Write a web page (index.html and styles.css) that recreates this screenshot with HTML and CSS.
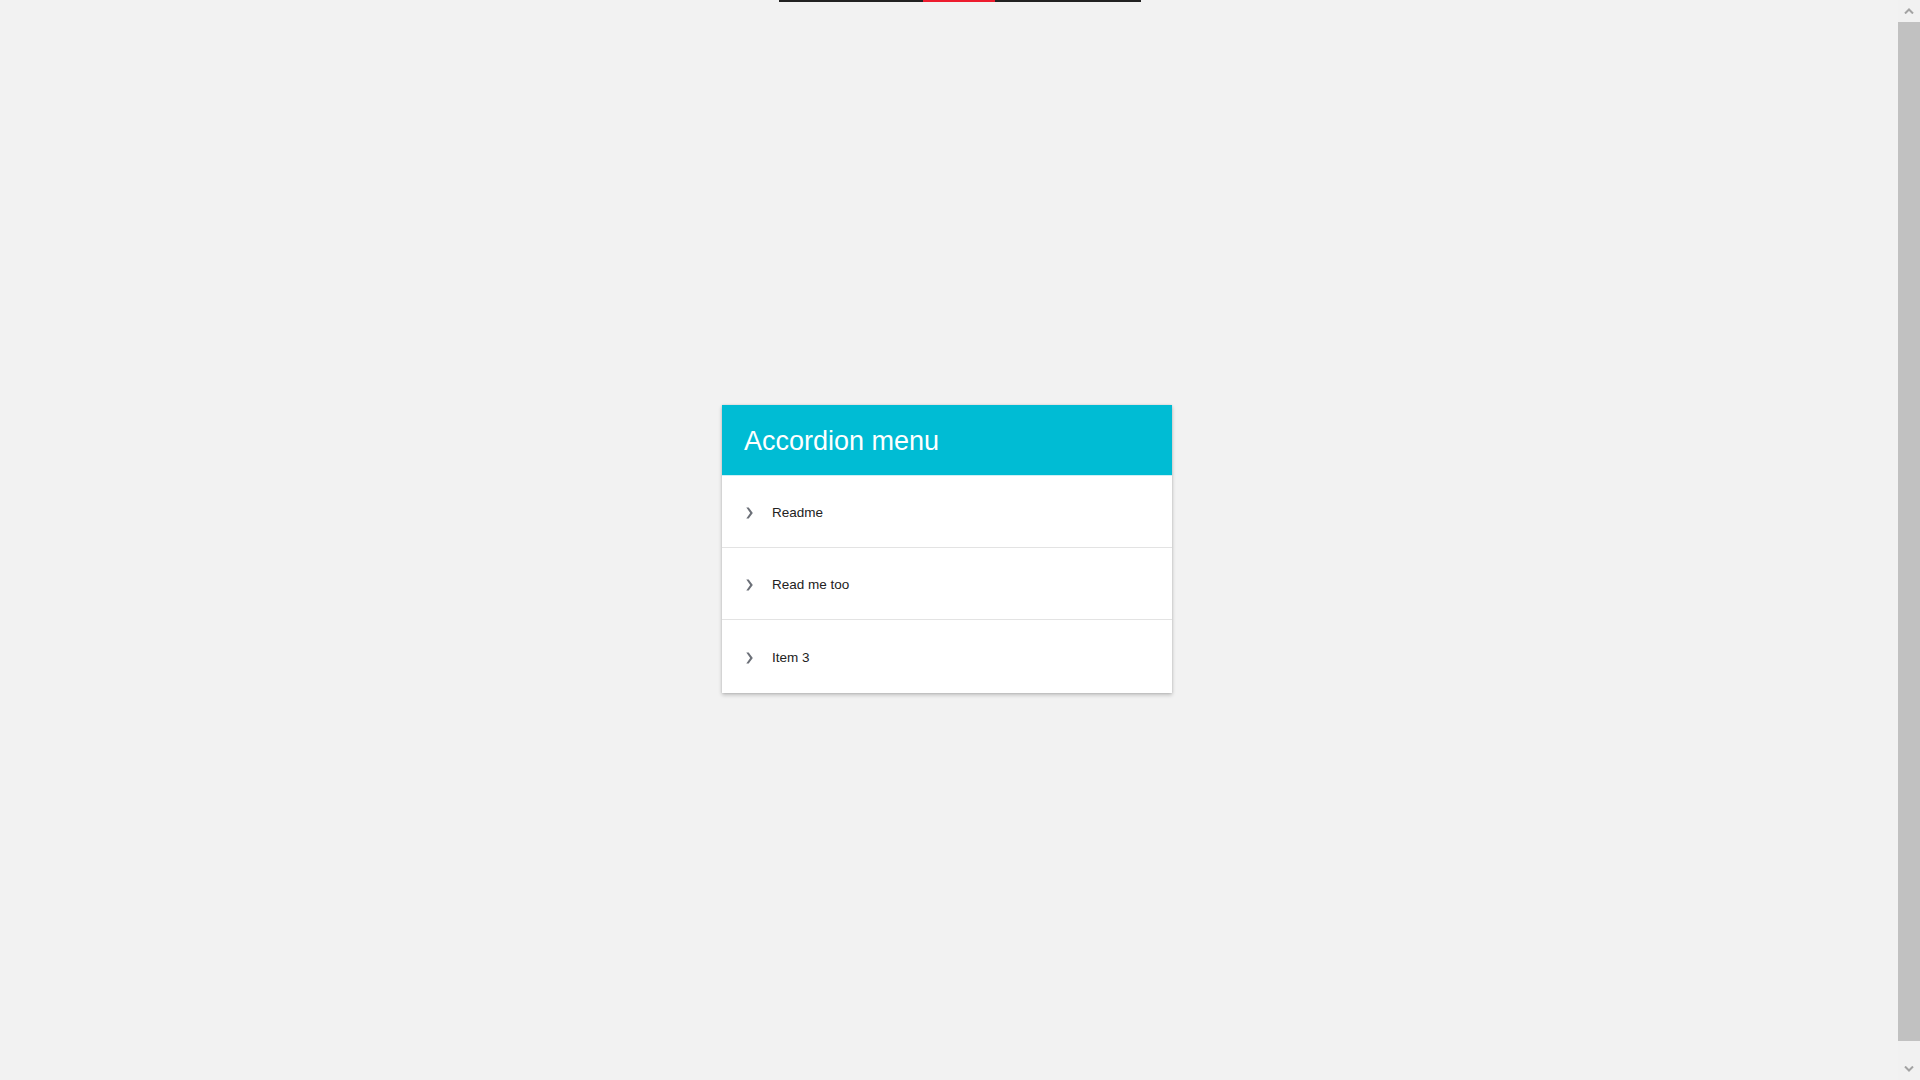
FILE: index.html
```html
<!DOCTYPE html>
<html lang="en">
<head>
<meta charset="utf-8">
<title>Accordion menu</title>
<link rel="stylesheet" href="styles.css">
</head>
<body>
<div class="loader"><span class="loader-seg"></span></div>
<main class="page">
  <section class="accordion">
    <header class="accordion-head">Accordion menu</header>
    <ul class="accordion-list">
      <li class="accordion-item">
        <svg class="chev" width="7" height="12" viewBox="0 0 7 12"><path d="M0.3 0.4 L2.7 0.4 L6.8 6 L2.7 11.6 L0.3 11.6 L4.2 6 Z" fill="#6c7078"/></svg>
        <span class="label">Readme</span>
      </li>
      <li class="accordion-item">
        <svg class="chev" width="7" height="12" viewBox="0 0 7 12"><path d="M0.3 0.4 L2.7 0.4 L6.8 6 L2.7 11.6 L0.3 11.6 L4.2 6 Z" fill="#6c7078"/></svg>
        <span class="label">Read me too</span>
      </li>
      <li class="accordion-item">
        <svg class="chev" width="7" height="12" viewBox="0 0 7 12"><path d="M0.3 0.4 L2.7 0.4 L6.8 6 L2.7 11.6 L0.3 11.6 L4.2 6 Z" fill="#6c7078"/></svg>
        <span class="label">Item 3</span>
      </li>
    </ul>
  </section>
</main>
<div class="scrollbar" aria-hidden="true">
  <div class="sb-btn">
    <svg width="10" height="6" viewBox="0 0 10 6"><path d="M1 5.5 L5 1.5 L9 5.5" fill="none" stroke="#a3a3a3" stroke-width="2"/></svg>
  </div>
  <div class="sb-track"><div class="sb-thumb"></div></div>
  <div class="sb-btn">
    <svg width="10" height="6" viewBox="0 0 10 6"><path d="M1 0.5 L5 4.5 L9 0.5" fill="none" stroke="#a3a3a3" stroke-width="2"/></svg>
  </div>
</div>
</body>
</html>
```
FILE: styles.css
```css
html {
  background: #f2f2f2;
}
body {
  margin: 0;
  min-height: 1080px;
  background: #f2f2f2;
  font-family: "Liberation Sans", Arial, sans-serif;
  color: #333;
  position: relative;
}
.loader {
  position: absolute;
  top: 0;
  left: 779px;
  width: 362px;
  height: 2px;
  background: #222;
  z-index: 2;
}
.loader-seg {
  position: absolute;
  top: 0;
  left: 144px;
  width: 72px;
  height: 2px;
  background: #ed1c2e;
}
.page {
  display: flex;
  justify-content: center;
  align-items: flex-start;
  padding: 405px 26px 0 0;
}
.accordion {
  width: 450px;
  background: #fff;
  box-shadow: 0 2px 4px rgba(0, 0, 0, 0.22), 0 0 2px rgba(0, 0, 0, 0.12);
}
.accordion-head {
  box-sizing: border-box;
  height: 71px;
  display: flex;
  align-items: center;
  padding-left: 22px;
  padding-top: 3px;
  background: #00bcd4;
  color: #fff;
  font-size: 27px;
  border-bottom: 1px solid #cdeff4;
}
.accordion-list {
  list-style: none;
  margin: 0;
  padding: 0;
}
.accordion-item {
  box-sizing: border-box;
  height: 72px;
  display: flex;
  align-items: center;
  padding-left: 24px;
  padding-top: 2px;
  border-bottom: 1px solid #e3e3e3;
  font-size: 13.5px;
}
.accordion-item:last-child {
  border-bottom: none;
  height: 73px;
  padding-top: 1px;
}
.chev {
  flex: none;
  margin-right: 19px;
  margin-top: 1px;
}
.label {
  color: #222;
}
.scrollbar {
  position: fixed;
  top: 0;
  right: 0;
  width: 22px;
  height: 100vh;
  background: #f1f1f1;
  display: flex;
  flex-direction: column;
  z-index: 3;
}
.sb-btn {
  flex: none;
  height: 22px;
  display: flex;
  align-items: center;
  justify-content: center;
}
.sb-track {
  flex: 1;
}
.sb-thumb {
  height: 1019px;
  background: #c1c1c1;
}
```
